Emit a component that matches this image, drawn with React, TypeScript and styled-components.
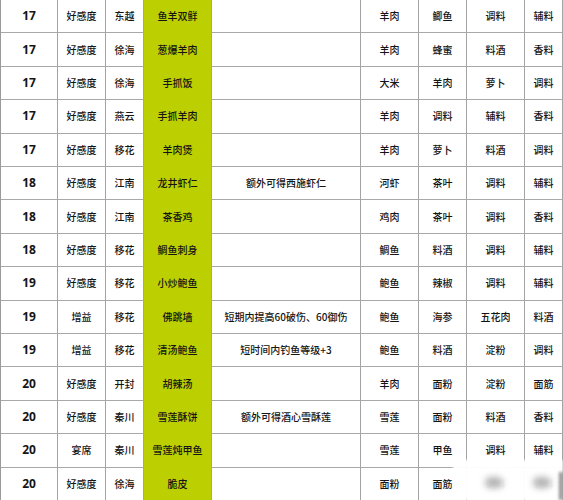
import React from "react";
import styled, { createGlobalStyle } from "styled-components";

const Global = createGlobalStyle`
  html, body { margin: 0; padding: 0; background: #ffffff; }
  body { font-family: "Noto Sans CJK SC", "Noto Sans", sans-serif; }
`;

const Page = styled.div`
  position: relative;
  width: 563px;
  height: 500px;
  overflow: hidden;
  background: #fff;
`;

const Grid = styled.div`
  display: grid;
  grid-template-columns: 57px 48px 38px 68px 149px 58px 48px 58px 38px;
  grid-template-rows: repeat(15, 1fr);
  height: 501px;
  border-left: 1px solid #9a9a9a;
  width: 563px;
  box-sizing: border-box;
`;

const Cell = styled.div<{ $green?: boolean; $num?: boolean }>`
  box-sizing: border-box;
  display: flex;
  align-items: center;
  justify-content: center;
  border-right: 1px solid #a3a3a3;
  border-bottom: 1px solid ${(p) => (p.$green ? "#bccf00" : "#a8a8a8")};
  background: ${(p) => (p.$green ? "#bccf00" : "#ffffff")};
  color: #141414;
  font-size: ${(p) => (p.$num ? "12px" : "10px")};
  font-weight: ${(p) => (p.$num ? 700 : 500)};
  font-family: ${(p) =>
    p.$num
      ? `"Open Sans", "Noto Sans", sans-serif`
      : `"Noto Sans CJK SC", "Noto Sans", sans-serif`};
  white-space: nowrap;
  line-height: 1;
`;

const Watermark = styled.div`
  position: absolute;
  left: 453px;
  top: 460px;
  width: 110px;
  height: 40px;
  background: rgba(255, 255, 255, 0.96);
  filter: blur(1px);
`;

const Blob = styled.div<{ $x: number }>`
  position: absolute;
  top: 17px;
  left: ${(p) => p.$x}px;
  width: 18px;
  height: 11px;
  border-radius: 6px;
  background: #b4b4b4;
  filter: blur(3px);
`;

const EdgeBar = styled.div`
  position: absolute;
  right: 0;
  top: 12px;
  width: 4px;
  bottom: 0;
  background: #8f8f8f;
  filter: blur(1px);
`;

type Row = [string, string, string, string, string, string, string, string, string];

const rows: Row[] = [
  ["17", "好感度", "东越", "鱼羊双鲜", "", "羊肉", "鲫鱼", "调料", "辅料"],
  ["17", "好感度", "徐海", "葱爆羊肉", "", "羊肉", "蜂蜜", "料酒", "香料"],
  ["17", "好感度", "徐海", "手抓饭", "", "大米", "羊肉", "萝卜", "调料"],
  ["17", "好感度", "燕云", "手抓羊肉", "", "羊肉", "调料", "辅料", "香料"],
  ["17", "好感度", "移花", "羊肉煲", "", "羊肉", "萝卜", "料酒", "调料"],
  ["18", "好感度", "江南", "龙井虾仁", "额外可得西施虾仁", "河虾", "茶叶", "调料", "辅料"],
  ["18", "好感度", "江南", "茶香鸡", "", "鸡肉", "茶叶", "调料", "香料"],
  ["18", "好感度", "移花", "鲷鱼刺身", "", "鲷鱼", "料酒", "调料", "辅料"],
  ["19", "好感度", "移花", "小炒鲍鱼", "", "鲍鱼", "辣椒", "调料", "辅料"],
  ["19", "增益", "移花", "佛跳墙", "短期内提高60破伤、60御伤", "鲍鱼", "海参", "五花肉", "料酒"],
  ["19", "增益", "移花", "清汤鲍鱼", "短时间内钓鱼等级+3", "鲍鱼", "料酒", "淀粉", "调料"],
  ["20", "好感度", "开封", "胡辣汤", "", "羊肉", "面粉", "淀粉", "面筋"],
  ["20", "好感度", "秦川", "雪莲酥饼", "额外可得酒心雪酥莲", "雪莲", "面粉", "料酒", "香料"],
  ["20", "宴席", "秦川", "雪莲炖甲鱼", "", "雪莲", "甲鱼", "调料", "辅料"],
  ["20", "好感度", "徐海", "脆皮", "", "面粉", "面筋", "调料", "辅料"],
];

export default function App() {
  return (
    <Page>
      <Global />
      <Grid>
        {rows.map((r, i) =>
          r.map((v, j) => (
            <Cell key={`${i}-${j}`} $num={j === 0} $green={j === 3}>
              {v}
            </Cell>
          ))
        )}
      </Grid>
      <Watermark>
        <Blob $x={32} />
        <Blob $x={80} />
        <EdgeBar />
      </Watermark>
    </Page>
  );
}
